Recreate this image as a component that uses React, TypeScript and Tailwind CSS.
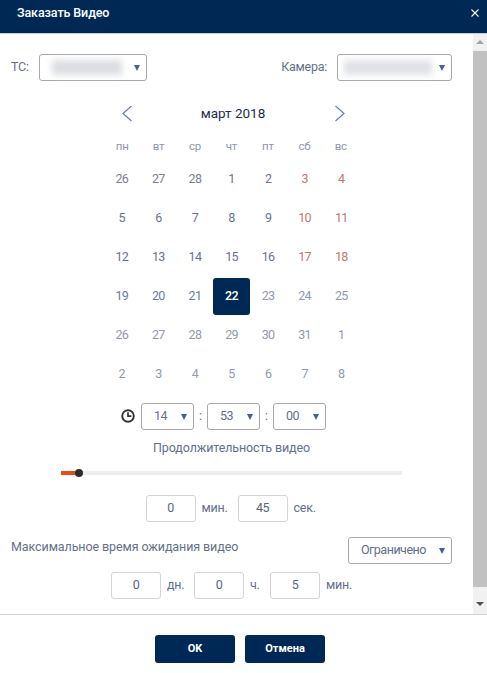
import React from "react";

const Tri = () => (
  <svg width="6" height="6" viewBox="0 0 6 6" className="shrink-0"><path d="M0 0h6L3 6z" fill="#4a5f8a" /></svg>
);

function Select({ w, children, pl = "pl-3" }: { w: string; children: React.ReactNode; pl?: string }) {
  return (
    <div className={`${w} h-[27px] ${pl} pr-[6px] flex items-center justify-between border border-[#a9a9a9] rounded-[3px] bg-white`}>
      {children}
    </div>
  );
}

function Num({ v }: { v: string }) {
  return (
    <div className="w-[50px] h-[27px] flex items-center justify-center border border-[#d4d4d4] rounded-[3px] text-[#5a6478] tracking-[-0.5px]">{v}</div>
  );
}

const weeks = [
  ["26", "27", "28", "1", "2", "3", "4"],
  ["5", "6", "7", "8", "9", "10", "11"],
  ["12", "13", "14", "15", "16", "17", "18"],
  ["19", "20", "21", "22", "23", "24", "25"],
  ["26", "27", "28", "29", "30", "31", "1"],
  ["2", "3", "4", "5", "6", "7", "8"],
];

function dayClass(r: number, c: number, d: string) {
  if (d === "22") return "bg-[#002855] text-white font-medium rounded-[3px]";
  if (r === 0 && c < 3) return "text-[#7a8090]";
  if (r > 3 || (r === 3 && c > 3)) return "text-[#9299ac]";
  if (c > 4) return "text-[#bd7a73]";
  if (r === 3) return "text-[#6b7c9e]";
  return "text-[#6a7389]";
}

export default function App() {
  return (
    <div className="w-[487px] h-[673px] flex flex-col bg-white text-[12.5px] tracking-[-0.25px] text-[#646f8a] overflow-hidden" style={{ fontFamily: "Roboto, sans-serif" }}>
      <header className="h-[34px] shrink-0 bg-[#002855] border-b border-[#c9ced6] flex items-center justify-between pl-[17px] pr-[8px] text-white">
        <span className="text-[12.5px] font-medium tracking-[-0.1px] -mt-[7px]">Заказать Видео</span>
        <svg width="8" height="8" viewBox="0 0 8 8" className="-mt-[8px]"><path d="M0.5 0.5l7 7M7.5 0.5l-7 7" stroke="#fff" strokeWidth="1.1" /></svg>
      </header>

      <div className="flex-1 min-h-0 flex">
        <main className="flex-1 pl-[11px] pr-[21px] pt-[20px]">
          <div className="flex items-center h-[27px]">
            <span className="w-[28px]">ТС:</span>
            <Select w="w-[108px]">
              <span className="w-[70px] h-[15px] bg-[#dcdee2] blur-[3px]" />
              <Tri />
            </Select>
            <span className="ml-auto mr-[10px]">Камера:</span>
            <Select w="w-[115px]" pl="pl-[6px]">
              <span className="w-[88px] h-[15px] bg-[#e0e2e6] blur-[3px]" />
              <Tri />
            </Select>
          </div>

          <div className="w-[255px] mx-auto mt-[20px]">
            <div className="flex items-center justify-between h-[24px] pl-[17px] pr-[13px] text-[13.5px] text-[#1f2c47] tracking-normal">
              <svg width="12" height="17" viewBox="0 0 12 17"><path d="M10.5 1L2 8.5l8.5 7.5" fill="none" stroke="#6b7ea3" strokeWidth="1.2" /></svg>
              <span className="-ml-[1px]">март 2018</span>
              <svg width="12" height="17" viewBox="0 0 12 17"><path d="M1.5 1L10 8.5 1.5 16" fill="none" stroke="#6b7ea3" strokeWidth="1.2" /></svg>
            </div>
            <div className="grid grid-cols-7 mt-[12px] text-center text-[#8f97a8] text-[11.5px]">
              {["пн", "вт", "ср", "чт", "пт", "сб", "вс"].map((d) => (
                <div key={d} className="h-[20px] flex items-center justify-center">{d}</div>
              ))}
            </div>
            <div className="grid grid-cols-7 auto-rows-[39px] mt-[3px] -mx-[0.5px] tracking-[-0.7px]">
              {weeks.flatMap((w, r) =>
                w.map((d, c) => (
                  <div key={`${r}-${c}`} className="flex items-center justify-center">
                    <span className={`w-[37px] h-[37px] flex items-center justify-center ${dayClass(r, c, d)}`}>{d}</span>
                  </div>
                ))
              )}
            </div>
          </div>

          <div className="flex items-center mt-[9px] ml-[110px]">
            <svg width="14" height="14" viewBox="0 0 14 14" className="mr-[6px] -mt-[1px]">
              <circle cx="7" cy="7" r="5.8" fill="none" stroke="#333" strokeWidth="1.9" />
              <path d="M7 3.2v4h3.4" fill="none" stroke="#333" strokeWidth="1.7" />
            </svg>
            <Select w="w-[53px]"><span className="tracking-[-0.5px]">14</span><Tri /></Select>
            <span className="w-[13px] text-center">:</span>
            <Select w="w-[53px]"><span className="tracking-[-0.5px]">53</span><Tri /></Select>
            <span className="w-[13px] text-center">:</span>
            <Select w="w-[53px]"><span className="tracking-[-0.5px]">00</span><Tri /></Select>
          </div>

          <div className="text-center mt-[9px] h-[17px] leading-[17px] tracking-[-0.13px]">Продолжительность видео</div>

          <div className="relative w-[341px] h-[4px] mx-auto mt-[15px] bg-[#ececec]">
            <div className="w-[18px] h-full bg-[#f0480f]" />
            <div className="absolute left-[14px] -top-[2px] w-[8px] h-[8px] rounded-full bg-[#2c2c2c]" />
          </div>

          <div className="flex items-center justify-center mt-[20px]">
            <Num v="0" />
            <span className="w-[42px] pl-[6px]">мин.</span>
            <Num v="45" />
            <span className="w-[30px] pl-[6px]">сек.</span>
          </div>

          <div className="flex items-start mt-[15px] h-[27px]">
            <span className="mt-[1px] tracking-[-0.1px]">Максимальное время ожидания видео</span>
            <div className="ml-auto">
              <Select w="w-[104px]"><span className="tracking-[-0.5px]">Ограничено</span><Tri /></Select>
            </div>
          </div>

          <div className="flex items-center mt-[8px] ml-[100px]">
            <Num v="0" />
            <span className="w-[33px] pl-[6px]">дн.</span>
            <Num v="0" />
            <span className="w-[26px] pl-[6px]">ч.</span>
            <Num v="5" />
            <span className="pl-[6px]">мин.</span>
          </div>
        </main>

        <aside className="w-[14px] bg-[#f1f1f1] flex flex-col items-center">
          <svg width="8" height="17" viewBox="0 0 8 17" className="shrink-0"><path d="M0 10l4-4 4 4z" fill="#a3a3a3" /></svg>
          <div className="w-full flex-1 bg-[#c1c1c1]" />
          <svg width="8" height="27" viewBox="0 0 8 27" className="shrink-0"><path d="M0 15h8l-4 4z" fill="#505050" /></svg>
        </aside>
      </div>

      <footer className="h-[59px] shrink-0 border-t border-[#d3d3d3] flex justify-center gap-[10px] pt-[20px] pr-[7px] text-[11px] font-bold text-white tracking-normal">
        <button className="w-[80px] h-[28px] bg-[#002855] rounded-[3px]">OK</button>
        <button className="w-[80px] h-[28px] bg-[#002855] rounded-[3px]">Отмена</button>
      </footer>
    </div>
  );
}
